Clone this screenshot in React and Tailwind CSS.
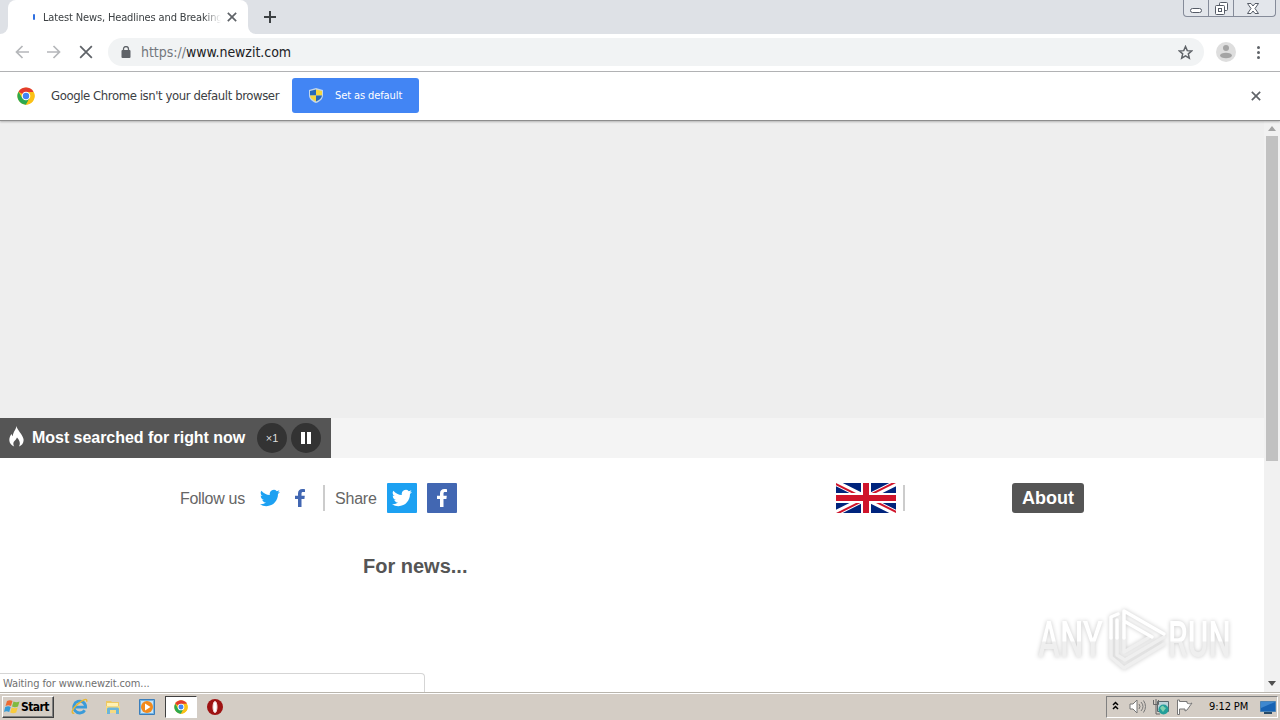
import React from 'react'

const uiFont = "font-['DejaVu_Sans_Condensed','Noto_Sans',sans-serif]"
const pageFont = "font-['Liberation_Sans',Arial,sans-serif]"

const ChromeLogo = ({ className }) => (
  <svg className={className} viewBox="0 0 48 48">
    <circle cx="24" cy="24" r="23" fill="#fbc116" />
    <path d="M24 24 L4.1 12.5 A23 23 0 0 1 43.9 12.5 Z" fill="#e33b2e" />
    <path d="M4.1 12.5 A23 23 0 0 0 24 47 L34 29.5 L24 24 L14 29.5 Z" fill="#2da94f" />
    <path d="M24 13 H44.2 A23 23 0 0 1 24 47 L34 29.5 Z" fill="#fbc116" />
    <circle cx="24" cy="24" r="11.5" fill="#fff" />
    <circle cx="24" cy="24" r="8.5" fill="#4285f4" />
  </svg>
)

const TwitterBird = ({ className }) => (
  <svg className={className} viewBox="0 0 24 24" fill="currentColor">
    <path d="M23.95 4.57a10 10 0 0 1-2.82.77 4.96 4.96 0 0 0 2.16-2.72c-.95.55-2 .95-3.13 1.18a4.92 4.92 0 0 0-8.38 4.48A13.93 13.93 0 0 1 1.64 3.16a4.92 4.92 0 0 0 1.52 6.57 4.9 4.9 0 0 1-2.23-.61v.06a4.92 4.92 0 0 0 3.95 4.83 5 5 0 0 1-2.21.08 4.94 4.94 0 0 0 4.6 3.42A9.87 9.87 0 0 1 0 19.54a13.99 13.99 0 0 0 7.56 2.21c9.05 0 14-7.5 14-13.98 0-.21 0-.42-.02-.63a9.94 9.94 0 0 0 2.46-2.55z" />
  </svg>
)

const FacebookF = ({ className }) => (
  <svg className={className} viewBox="0 0 10 18" fill="currentColor">
    <path d="M3 18V10H0V6.8h3V4.6C3 1.6 4.7 0 7.3 0 8.600 0 9.700.1 10 .2v2.900H8.200C6.800 3.100 6.500 3.800 6.500 4.800v2h3.300L9.400 10H6.500v8z" />
  </svg>
)

const Cross = ({ className, width = 2 }) => (
  <svg className={className} viewBox="0 0 12 12" stroke="currentColor" strokeWidth={width}>
    <path d="M1 1 11 11M11 1 1 11" />
  </svg>
)

const TabStrip = () => (
  <div className="flex h-[34px] shrink-0 justify-between bg-[#dee1e6]">
    <div className="flex">
      <div className="w-2 bg-white">
        <div className="h-full rounded-br-lg bg-[#dee1e6]" />
      </div>
      <div className="flex w-60 items-center rounded-t-lg bg-white pl-[25px]">
        <div className="h-[6px] w-[2px] rounded bg-[#2f6fe0]" />
        <div className="ml-[8px] w-[178px] overflow-hidden pt-px mask-r-from-90% mask-r-to-100%">
          <span className={`${uiFont} block whitespace-nowrap text-[11px] leading-[18px] tracking-[-0.14px] text-[#3c4043]`}>
            Latest News, Headlines and Breaking
          </span>
        </div>
        <Cross className="ml-[6px] size-[10px] text-[#5f6368]" />
      </div>
      <div className="w-2 bg-white">
        <div className="h-full rounded-bl-lg bg-[#dee1e6]" />
      </div>
      <svg className="mt-[11px] ml-2 size-3" viewBox="0 0 12 12" stroke="#3c4043" strokeWidth="2">
        <path d="M6 0V12M0 6H12" />
      </svg>
    </div>
    <div className="mr-[4px] flex h-[17px] w-[93px] rounded-b border border-t-0 border-[#858b99] bg-[#e3e6eb]">
      <div className="flex w-[25px] items-end justify-center border-r border-[#858b99] pb-[3px]">
        <div className="h-[5px] w-3 rounded-sm border border-[#555b66] bg-white" />
      </div>
      <div className="flex w-[25px] items-center justify-center border-r border-[#858b99]">
        <svg className="size-[13px]" viewBox="0 0 13 13" fill="#fff" stroke="#555b66">
          <rect x="4.5" y=".5" width="8" height="8" rx="1" />
          <rect x=".5" y="3.500" width="9" height="9" rx="1" />
          <rect x="3.500" y="6.500" width="3" height="3" />
        </svg>
      </div>
      <div className="flex flex-1 items-center justify-center pr-[3px]">
        <svg className="h-[11px] w-3" viewBox="0 0 12 11" fill="#fff" stroke="#555b66">
          <path d="M.5.5H4L6 3 8 .5h3.500L8 5.500l3.500 5H8L6 8 4 10.500H.5L4 5.500z" />
        </svg>
      </div>
    </div>
  </div>
)

const Toolbar = () => (
  <div className="flex h-[38px] shrink-0 items-center border-b border-[#b4b5b7] bg-white pb-px pl-[15px]">
    <svg className="size-[14px]" viewBox="0 0 14 14" fill="none" stroke="#b5b7ba" strokeWidth="1.7">
      <path d="M14 7H1.500M7.500 1 1.500 7l6 6" />
    </svg>
    <svg className="ml-[18px] size-[14px]" viewBox="0 0 14 14" fill="none" stroke="#b5b7ba" strokeWidth="1.7">
      <path d="M0 7h12.500M6.500 1l6 6-6 6" />
    </svg>
    <Cross className="ml-[18px] size-[14px] text-[#5f6368]" width={1.5} />
    <div className="ml-[15px] flex h-7 w-[1096px] items-center rounded-full bg-[#f1f3f4] pr-[11px] pl-[13px]">
      <svg className="h-3 w-[10px]" viewBox="0 0 10 12">
        <rect x="0.500" y="4" width="9" height="8" rx="1" fill="#5f6368" />
        <path d="M2.500 5V3a2.500 2.500 0 0 1 5 0v2" fill="none" stroke="#5f6368" strokeWidth="1.300" />
      </svg>
      <span className={`${uiFont} ml-[10px] flex-1 text-[14px] leading-5 tracking-[-0.03px] text-[#202124]`}>
        <span className="text-[#73777c]">https://</span>www.newzit.com
      </span>
      <svg className="size-[15px]" viewBox="0 0 24 24" fill="none" stroke="#5f6368" strokeWidth="2.400">
        <path d="M12 2.500 14.800 9l7 .6-5.300 4.600 1.600 6.900-6.100-3.700-6.100 3.700 1.600-6.900L2.200 9.600l7-.6z" />
      </svg>
    </div>
    <svg className="ml-3 size-5" viewBox="0 0 20 20">
      <circle cx="10" cy="10" r="10" fill="#dedede" />
      <circle cx="10" cy="6" r="3" fill="#a4a4a4" />
      <ellipse cx="10" cy="13.500" rx="6" ry="2.800" fill="#a4a4a4" />
    </svg>
    <div className="ml-[21px] flex flex-col gap-[2px]">
      <div className="size-[3px] rounded-full bg-[#5f6368]" />
      <div className="size-[3px] rounded-full bg-[#5f6368]" />
      <div className="size-[3px] rounded-full bg-[#5f6368]" />
    </div>
  </div>
)

const InfoBar = () => (
  <div className="z-10 flex h-[49px] shrink-0 items-center border-b border-[#8d8d8d] bg-white pb-px pl-[17px] shadow-[0_1px_2px_rgba(0,0,0,0.25)]">
    <ChromeLogo className="size-[18px]" />
    <span className={`${uiFont} ml-4 w-[241px] whitespace-nowrap text-[13px] leading-5 tracking-[-0.41px] text-[#3c4043]`}>
      Google Chrome isn't your default browser
    </span>
    <button className="flex h-[35px] w-[127px] items-center rounded-[3px] bg-[#4285f4] pl-[17px]">
      <svg className="h-[15px] w-[14px]" viewBox="0 0 14 15">
        <path d="M7 0 14 2V7c0 4-3 6.500-7 8-4-1.500-7-4-7-8V2z" fill="#c3d6ea" />
        <path d="M7 1.500V7.500H1V3z" fill="#2769b8" />
        <path d="M7 1.500 13 3v4.500H7z" fill="#f6d73d" />
        <path d="M1 7.500h6v6C3.500 12.200 1.300 10 1 7.500z" fill="#f6d73d" />
        <path d="M13 7.500H7v6c3.500-1.300 5.700-3.500 6-6z" fill="#2769b8" />
      </svg>
      <span className={`${uiFont} ml-3 whitespace-nowrap text-[11px] leading-4 tracking-[-0.1px] text-white`}>Set as default</span>
    </button>
    <Cross className="mr-[19px] ml-auto size-[10px] text-[#5f6368]" />
  </div>
)

const TrendingBar = () => (
  <div className="h-10 bg-[#f4f4f4]">
    <div className="flex h-10 w-[331px] items-center bg-[#555] pl-[9px]">
      <svg className="mb-[3px] h-[21px] w-[15px]" viewBox="0 0 15 21" fill="#fff">
        <path d="M7.500 0C8 4 13.500 8 14.500 13c.6 3.500-1.500 6.500-4.500 7.500 1.500-2.500 1-6-2-9-1 2-1.500 2.500-3 4-1 1.500-.8 3.500.2 5C2.500 19.500.3 17 .3 14c0-2.500 1-4.500 2.200-6 .3 1 .7 1.800 1.300 2.300C4 6 6.800 4 7.500 0z" />
      </svg>
      <span className="ml-2 w-[225px] whitespace-nowrap text-[16px] font-bold tracking-[-0.04px] text-white">Most searched for right now</span>
      <button className="size-[30px] shrink-0 rounded-full bg-[#333] text-[11px] text-[#ddd]">×1</button>
      <button className="ml-1 flex size-[30px] shrink-0 items-center justify-center gap-[2px] rounded-full bg-[#333]">
        <span className="h-3 w-1 bg-white" />
        <span className="h-3 w-1 bg-white" />
      </button>
    </div>
  </div>
)

const UnionJack = () => (
  <svg className="h-[30px] w-[60px]" viewBox="0 0 60 30">
    <clipPath id="jackFrame">
      <path d="M0 0h60v30H0z" />
    </clipPath>
    <clipPath id="jackSaltire">
      <path d="M30 15h30v15zv15H0zH0V0zV0h30z" />
    </clipPath>
    <g clipPath="url(#jackFrame)">
      <path d="M0 0h60v30H0z" fill="#00247d" />
      <path d="M0 0 60 30M60 0 0 30" stroke="#fff" strokeWidth="6" />
      <path d="M0 0 60 30M60 0 0 30" clipPath="url(#jackSaltire)" stroke="#cf142b" strokeWidth="4" />
      <path d="M30 0v30M0 15h60" stroke="#fff" strokeWidth="10" />
      <path d="M30 0v30M0 15h60" stroke="#cf142b" strokeWidth="6" />
    </g>
  </svg>
)

const SocialRow = () => (
  <div className="mt-[25px] flex h-[30px] items-center pl-[180px] text-[16px] text-[#666]">
    <span className="w-20 pt-px tracking-[-0.3px]">Follow us</span>
    <TwitterBird className="size-5 text-[#1da1f2]" />
    <FacebookF className="ml-[15px] h-[18px] w-[10px] text-[#4267b2]" />
    <div className="ml-[18px] h-[26px] w-[2px] bg-[#ccc]" />
    <span className="ml-[10px] w-[52px] pt-px tracking-[-0.2px]">Share</span>
    <div className="flex size-[30px] items-center justify-center rounded-[1px] bg-[#1da1f2]">
      <TwitterBird className="size-5 text-white" />
    </div>
    <div className="ml-[10px] flex size-[30px] items-center justify-center rounded-[1px] bg-[#4267b2]">
      <FacebookF className="h-[18px] w-[10px] text-white" />
    </div>
    <div className="ml-[379px]">
      <UnionJack />
    </div>
    <div className="ml-[7px] h-[26px] w-[2px] bg-[#ccc]" />
    <button className="ml-[107px] h-[30px] w-[72px] rounded-[3px] bg-[#555] text-[18px] font-bold text-white">About</button>
  </div>
)

const Scrollbar = () => (
  <div className="flex w-4 shrink-0 flex-col items-center bg-[#f1f1f1]">
    <svg className="mt-[5px] h-[5px] w-2" viewBox="0 0 8 5" fill="#a3a3a3">
      <path d="M4 0 8 5H0z" />
    </svg>
    <div className="mt-[5px] h-[325px] w-3 bg-[#c1c1c1]" />
    <svg className="mt-auto mb-[6px] h-[5px] w-2" viewBox="0 0 8 5" fill="#505050">
      <path d="M0 0h8L4 5z" />
    </svg>
  </div>
)

const Watermark = () => (
  <div className="absolute top-[487px] left-[1038px] flex h-[64px] w-[200px] items-center font-['Roboto',sans-serif] text-[50px] leading-none font-medium drop-shadow-[0_0_2px_rgba(0,0,0,0.22)]">
    <span className="w-[69px]">
      <span className="inline-block origin-left scale-x-[0.66] bg-linear-to-b from-white from-52% to-[#efefef] to-54% bg-clip-text text-transparent">ANY</span>
    </span>
    <svg className="h-[64px] w-[60px] shrink-0" viewBox="0 0 60 64" fill="none" strokeLinejoin="round" strokeLinecap="round">
      <path d="M4 30v19l13 11 40-24M10 30v17l8 5 39-23M17 30v14l24-14" stroke="#efefef" strokeWidth="3.500" />
      <path d="M4 30V9l7-3M10 30V12M17 30V3l40 23M17 13l28 16" stroke="#fff" strokeWidth="3.500" />
    </svg>
    <span className="ml-px">
      <span className="inline-block origin-left scale-x-[0.63] bg-linear-to-b from-white from-52% to-[#efefef] to-54% bg-clip-text text-transparent">RUN</span>
    </span>
  </div>
)

const Page = () => (
  <div className="relative flex min-h-0 flex-1 bg-white">
    <div className={`${pageFont} flex-1`}>
      <div className="h-[297px] bg-[#eee]" />
      <TrendingBar />
      <SocialRow />
      <h2 className="mt-[38px] pl-[363px] text-[20px] leading-[30px] font-bold text-[#555]">For news...</h2>
    </div>
    <Scrollbar />
    <Watermark />
    <div className="absolute bottom-0 left-0 h-[19px] w-[425px] rounded-tr border-t border-r border-[#d5d5d5] bg-white pl-[3px]">
      <span className={`${uiFont} block whitespace-nowrap text-[11px] leading-[20px] tracking-[-0.1px] text-[#707070]`}>Waiting for www.newzit.com...</span>
    </div>
  </div>
)

const Taskbar = () => (
  <div className="flex h-7 shrink-0 items-center border-t border-[#b9b5ad] bg-[#d4cdc5] shadow-[inset_0_1px_0_#fff]">
    <button className="ml-[2px] flex h-[22px] w-[52px] items-center border border-t-white border-r-[#404040] border-b-[#404040] border-l-white pl-px shadow-[inset_-1px_-1px_0_#808080]">
      <svg className="h-[16px] w-[17px] shrink-0" viewBox="0 0 17 16">
        <path d="M3 2c2-1 4-1 5.500 0L7 7C5 6 3.500 6 1.500 7z" fill="#ed6b32" />
        <path d="M9.500 2.500c2 1 4 1 6 0l-1.500 5c-2 1-4 1-6 0z" fill="#80ba40" />
        <path d="M1.200 8c2-1 4-1 5.500 0l-1.500 5c-2-1-3.500-1-5.200 0z" fill="#369bd7" />
        <path d="M7.700 8.500c2 1 4 1 6 0l-1.500 5c-2 1-4 1-6 0z" fill="#f9cb3e" />
      </svg>
      <span className={`${uiFont} pt-px text-[12px] font-bold tracking-[-0.6px] text-black`}>Start</span>
    </button>
    <svg className="ml-[17px] size-[17px]" viewBox="0 0 18 18" fill="none">
      <path d="M14.500 13A6.300 6.300 0 1 1 15.500 9.700H4" stroke="#3a9bd9" strokeWidth="3" />
      <path d="M3.500 16C-.5 17 1 11.500 7 6.500S18-.5 16.500 4" stroke="#e8b731" strokeWidth="1.500" />
    </svg>
    <svg className="ml-[17px] size-4" viewBox="0 0 16 16">
      <path d="M1 2h5l1 1h7v8H1z" fill="#edc862" />
      <path d="M2 4h11v5H2z" fill="#fff1b3" />
      <path d="M1 7h14v7H1z" fill="#f5da81" />
      <path d="M2 15V10q0-1.500 1.500-1.500h9Q14 8.500 14 10v5h-3v-4H5v4z" fill="#6bb5da" />
    </svg>
    <svg className="ml-[18px] size-4" viewBox="0 0 16 16">
      <path d="M.5.5h15v15H.5z" fill="#73b4e4" stroke="#3b7ebb" />
      <path d="M2 2h12v12H2z" fill="#c9e5f8" />
      <circle cx="8" cy="8" r="6" fill="#f28a1c" />
      <path d="M6 4.500 11.500 8 6 11.500z" fill="#fff" />
    </svg>
    <div className="ml-[10px] flex h-[22px] w-8 items-center justify-center border border-t-[#404040] border-r-white border-b-white border-l-[#404040] bg-white">
      <ChromeLogo className="size-[14px]" />
    </div>
    <svg className="ml-[10px] size-4" viewBox="0 0 16 16">
      <circle cx="8" cy="8" r="8" fill="#9e1212" />
      <ellipse cx="8" cy="8" rx="2" ry="5.600" fill="#fff" stroke="#f4dada" strokeWidth="1" />
    </svg>

    <div className="mr-[2px] ml-auto flex h-[22px] w-[172px] items-center border border-t-[#808080] border-r-white border-b-white border-l-[#808080] pl-[5px]">
      <svg className="mb-[2px] h-[9px] w-[7px]" viewBox="0 0 7 9" fill="none" stroke="#000" strokeWidth="1.500">
        <path d="M1 4 3.500 1.500 6 4M1 8 3.500 5.500 6 8" />
      </svg>
      <svg className="ml-[10px] h-[15px] w-[17px]" viewBox="0 0 17 15" fill="none" stroke="#777">
        <path d="M1 5h3l4-4v13l-4-4H1z" fill="#fff" />
        <path d="M10 5q2 2.500 0 5M12 3q4 4.500 0 9M14.500 1.500q4 6 0 12" />
      </svg>
      <svg className="ml-[7px] size-4" viewBox="0 0 16 16">
        <path d="M4.500 2.500h11v10h-11z" fill="#bdd4da" stroke="#59676c" />
        <path d="M.5 1v4.500h5V1M3 5.500V15h4M3 0v5" fill="none" stroke="#666" />
        <circle cx="10.500" cy="10.500" r="5" fill="#239f9a" />
        <path d="M7 9q3-4 4-1l2 1-3 4z" fill="#80d1ae" />
      </svg>
      <svg className="ml-2 size-4" viewBox="0 0 16 16" fill="#fff" stroke="#777">
        <path d="M.5 1v14.500h2V10H8v2l2-1 5-7c-2 1-3 1-5 0V2.500H2.500V1z" />
      </svg>
      <span className={`${uiFont} ml-4 w-[51px] pt-px whitespace-nowrap text-[11px] tracking-[-0.1px] text-black`}>9:12 PM</span>
      <svg className="h-[14px] w-4 shrink-0" viewBox="0 0 16 14">
        <path d="M.5 1.500h15v10H.5z" fill="#1863b4" stroke="#4b83b4" />
        <path d="M1 2h14L1 8z" fill="#3f88cf" />
        <path d="M4 12h8v2H4z" fill="#284a68" />
      </svg>
    </div>
  </div>
)

export default function App() {
  return (
    <div className="flex h-[720px] w-[1280px] flex-col overflow-hidden bg-white">
      <TabStrip />
      <Toolbar />
      <InfoBar />
      <Page />
      <Taskbar />
    </div>
  )
}
